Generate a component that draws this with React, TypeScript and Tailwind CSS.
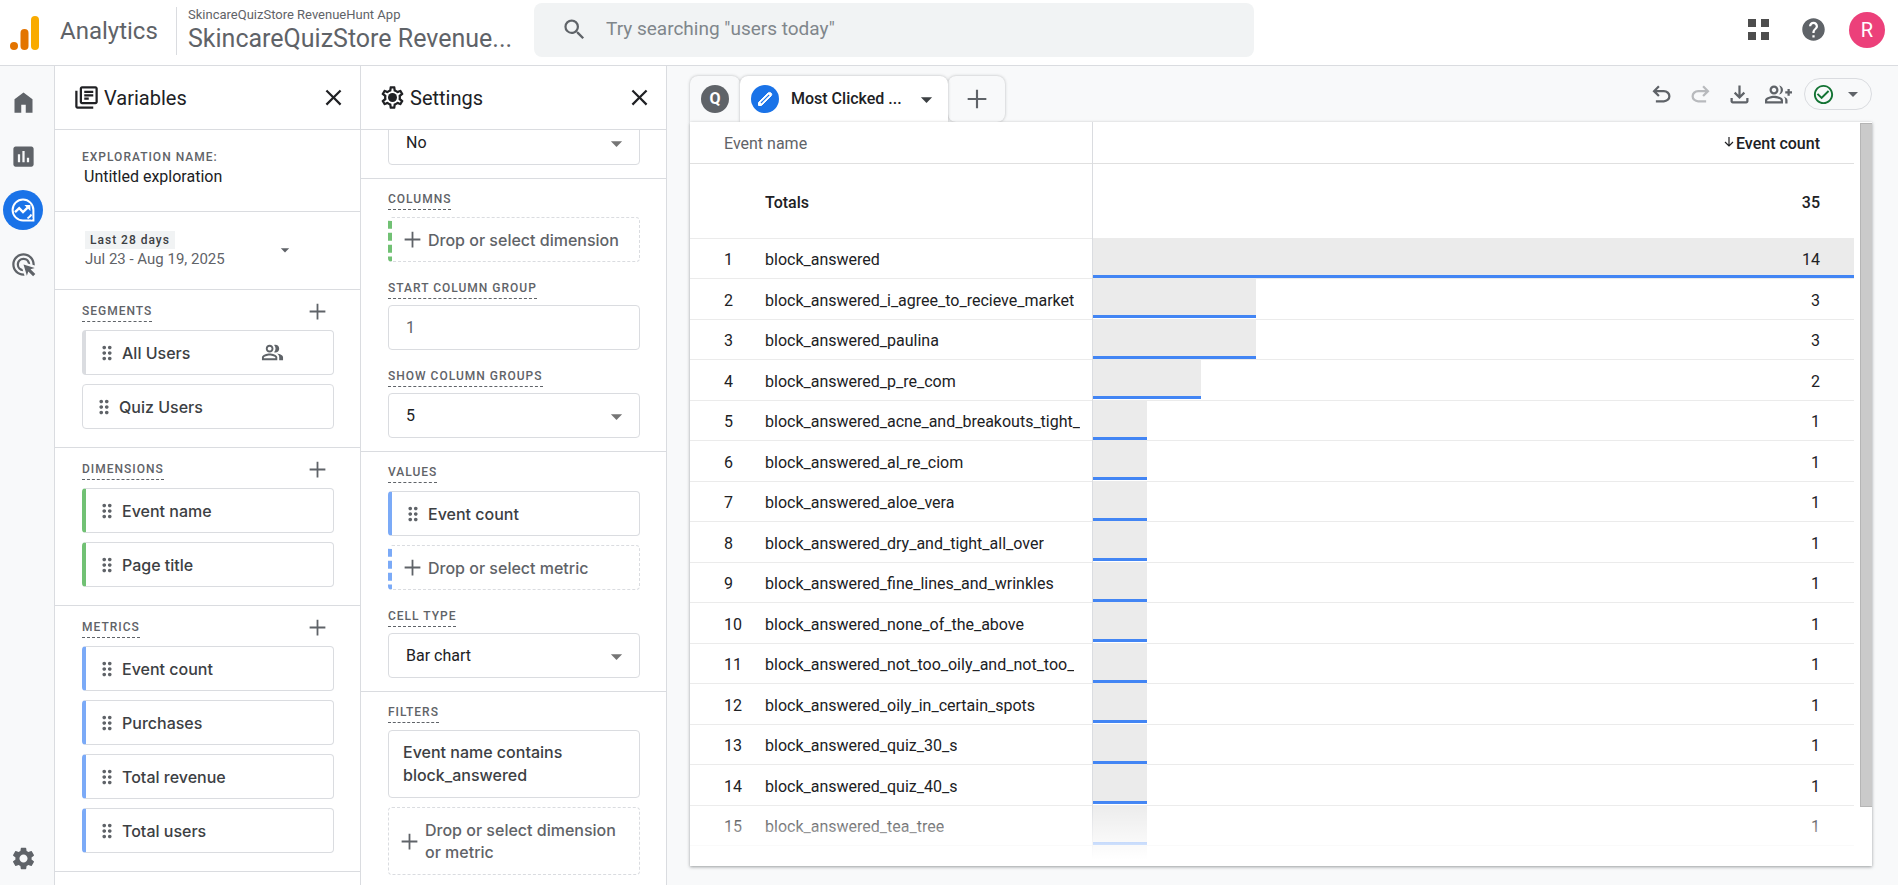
import { ReactNode, useState } from "react";
import {
  MdAdsClick,
  MdArrowDropDown,
  MdCheckCircleOutline,
  MdClose,
  MdDragIndicator,
  MdHelp,
  MdInsertChart,
  MdOutlineGroupAdd,
  MdOutlineLibraryBooks,
  MdOutlinePeopleAlt,
  MdSearch,
  MdSettings,
} from "react-icons/md";

type Accent = "none" | "gray" | "green" | "blue";

interface EventRow {
  name: string;
  count: number;
}

const rows: EventRow[] = [
  { name: "block_answered", count: 14 },
  { name: "block_answered_i_agree_to_recieve_market", count: 3 },
  { name: "block_answered_paulina", count: 3 },
  { name: "block_answered_p_re_com", count: 2 },
  { name: "block_answered_acne_and_breakouts_tight_", count: 1 },
  { name: "block_answered_al_re_ciom", count: 1 },
  { name: "block_answered_aloe_vera", count: 1 },
  { name: "block_answered_dry_and_tight_all_over", count: 1 },
  { name: "block_answered_fine_lines_and_wrinkles", count: 1 },
  { name: "block_answered_none_of_the_above", count: 1 },
  { name: "block_answered_not_too_oily_and_not_too_", count: 1 },
  { name: "block_answered_oily_in_certain_spots", count: 1 },
  { name: "block_answered_quiz_30_s", count: 1 },
  { name: "block_answered_quiz_40_s", count: 1 },
  { name: "block_answered_tea_tree", count: 1 },
  { name: "block_answered_teenaged_30_s", count: 1 },
];

const maxCount = 14;

const accentClass: Record<Accent, string> = {
  none: "",
  gray: "border-l-4 border-l-[#dadce0]",
  green: "border-l-4 border-l-[#71c174]",
  blue: "border-l-4 border-l-[#7baaf7]",
};

/* icons */

const Plus = ({ className = "size-[27px]" }: { className?: string }) => (
  <svg viewBox="0 0 24 24" className={`${className} shrink-0`} fill="none" stroke="currentColor" strokeWidth="1.6">
    <path d="M12 5v14M5 12h14" />
  </svg>
);

const Symbol = ({ d, className = "" }: { d: string; className?: string }) => (
  <svg viewBox="0 -960 960 960" className={`size-[27px] ${className}`} fill="currentColor">
    <path d={d} />
  </svg>
);

const undoPath =
  "M280-200v-80h284q63 0 109.5-40T720-420q0-60-46.5-100T564-560H312l104 104-56 56-200-200 200-200 56 56-104 104h252q97 0 167 63.5T800-420q0 93-69 156.5T564-200H280Z";
const downloadPath =
  "M480-320 280-520l56-58 104 104v-326h80v326l104-104 56 58-200 200ZM240-160q-33 0-56.5-23.5T160-240v-120h80v120h480v-120h80v120q0 33-23.5 56.5T720-160H240Z";
const homePath = "M160-120v-480l320-240 320 240v480H560v-280H400v280H160Z";

const GearOutline = () => (
  <svg viewBox="0 0 24 24" className="size-[27px]" fill="currentColor">
    <path d="M19.43 12.98c.04-.32.07-.64.07-.98 0-.34-.03-.66-.07-.98l2.11-1.65c.19-.15.24-.42.12-.64l-2-3.46a.5.5 0 0 0-.61-.22l-2.49 1c-.52-.4-1.08-.73-1.69-.98l-.38-2.65A.488.488 0 0 0 14 2h-4c-.25 0-.46.18-.49.42l-.38 2.65c-.61.25-1.17.59-1.69.98l-2.49-1a.566.566 0 0 0-.18-.03c-.17 0-.34.09-.43.25l-2 3.46c-.13.22-.07.49.12.64l2.11 1.65c-.04.32-.07.65-.07.98 0 .33.03.66.07.98l-2.11 1.65c-.19.15-.24.42-.12.64l2 3.46a.5.5 0 0 0 .61.22l2.49-1c.52.4 1.08.73 1.69.98l.38 2.65c.03.24.24.42.49.42h4c.25 0 .46-.18.49-.42l.38-2.65c.61-.25 1.17-.59 1.69-.98l2.49 1c.06.02.12.03.18.03.17 0 .34-.09.43-.25l2-3.46c.12-.22.07-.49-.12-.64l-2.11-1.65zm-1.98-1.71c.04.31.05.52.05.73 0 .21-.02.43-.05.73l-.14 1.13.89.7 1.08.84-.7 1.21-1.27-.51-1.04-.42-.9.68c-.43.32-.84.56-1.25.73l-1.06.43-.16 1.13-.2 1.35h-1.4l-.19-1.35-.16-1.13-1.06-.43c-.43-.18-.83-.41-1.23-.71l-.91-.7-1.06.43-1.27.51-.7-1.21 1.08-.84.89-.7-.14-1.13c-.03-.31-.05-.54-.05-.74s.02-.43.05-.73l.14-1.13-.89-.7-1.08-.84.7-1.21 1.27.51 1.04.42.9-.68c.43-.32.84-.56 1.25-.73l1.06-.43.16-1.13.2-1.35h1.39l.19 1.35.16 1.13 1.06.43c.43.18.83.41 1.23.71l.91.7 1.06-.43 1.27-.51.7 1.21-1.07.85-.89.7.14 1.13z" />
    <circle cx="12" cy="12" r="4" />
  </svg>
);

const ExploreIcon = () => (
  <svg viewBox="0 0 24 24" className="size-6" fill="none" stroke="currentColor">
    <path d="M12 1.6A10.4 10.4 0 1 0 12 22.4H22.4V12A10.4 10.4 0 0 0 12 1.6Z" strokeWidth="2" />
    <path d="M20.4 16.5A9.5 9.5 0 0 1 16.5 20.4" strokeWidth="2" />
    <path d="M4 14.2 8.2 10.2 12 14 17.4 8.8" strokeWidth="2.4" />
    <path d="M13.4 7h6v6Z" fill="currentColor" stroke="none" />
    <circle cx="20.6" cy="20.6" r="1" fill="#1a73e8" stroke="none" />
  </svg>
);

const PencilIcon = () => (
  <svg viewBox="0 0 16 16" className="size-4" fill="none" stroke="currentColor" strokeLinejoin="round">
    <path d="M1.5 14.5V11.5L11 2Q12.5.8 14 2T14 5L4.5 14.5Z" fill="currentColor" />
    <path d="M4 12 12.2 3.8" stroke="#1a73e8" strokeWidth="1.2" />
  </svg>
);

const AnalyticsLogo = () => (
  <svg viewBox="0 0 29 34" className="h-[34px] w-[29px] shrink-0">
    <rect x="21" y="0" width="8" height="34" rx="4" fill="#f9ab00" />
    <rect x="10.5" y="13" width="8" height="21" rx="4" fill="#e37400" />
    <circle cx="4" cy="30" r="4" fill="#e37400" />
  </svg>
);

/* panels */

const SectionLabel = ({ children, htmlFor }: { children: ReactNode; htmlFor?: string }) => {
  const className =
    "block w-fit border-b border-dashed border-[#5f6368] text-xs leading-5 font-medium tracking-[1px] text-[#5f6368] uppercase";

  return htmlFor ? (
    <label htmlFor={htmlFor} className={className}>
      {children}
    </label>
  ) : (
    <h3 className={className}>{children}</h3>
  );
};

const Chip = ({ label, accent, people }: { label: string; accent: Accent; people?: boolean }) => (
  <button
    className={`flex h-[45px] w-full items-center rounded border border-[#dadce0] pr-[49px] pl-2.5 text-left font-[Inter,sans-serif] text-base font-medium text-[#3c4043] ${accentClass[accent]}`}
  >
    <MdDragIndicator className="mr-1 size-[22px] text-[#5f6368]" />
    <span className="grow">{label}</span>
    {people && <MdOutlinePeopleAlt className="size-[23px] text-[#5f6368]" />}
  </button>
);

const DropZone = ({ label, accent }: { label: string; accent: Accent }) => (
  <button
    className={`flex min-h-[45px] w-full items-center rounded border border-dashed border-[#dadce0] pr-2 pl-[7px] text-left font-[Inter,sans-serif] text-base leading-[22px] font-medium text-[#5f6368] ${accentClass[accent]}`}
  >
    <Plus />
    <span className="ml-0.5">{label}</span>
  </button>
);

const SelectField = ({ id, value, label }: { id: string; value: string; label?: string }) => (
  <div className="relative">
    <select
      id={id}
      aria-label={label}
      className="h-[45px] w-full appearance-none rounded border border-[#dadce0] bg-white px-[17px] text-base text-[#202124]"
    >
      <option>{value}</option>
    </select>
    <MdArrowDropDown className="pointer-events-none absolute top-2.5 right-2.5 size-[27px] text-[#757575]" />
  </div>
);

const PanelHeader = ({ icon, title }: { icon: ReactNode; title: string }) => (
  <header className="flex h-16 shrink-0 items-center border-b border-[#dadce0] pr-[13px] pl-[18px] text-[#202124]">
    {icon}
    <h2 className="ml-1 grow text-xl">{title}</h2>
    <button aria-label={`Close ${title}`}>
      <MdClose className="size-[27px]" />
    </button>
  </header>
);

const VariableSection = ({ title, children }: { title: string; children: ReactNode }) => (
  <section className="border-b border-[#dadce0] pt-[11px] pr-[26px] pb-[18px] pl-[27px]">
    <div className="flex items-center justify-between pr-[3px] pb-2">
      <SectionLabel>{title}</SectionLabel>
      <button aria-label={`Add ${title.toLowerCase()}`} className="-my-1 text-[#5f6368]">
        <Plus />
      </button>
    </div>
    <div className="flex flex-col gap-[9px]">{children}</div>
  </section>
);

const VariablesPanel = () => (
  <aside className="flex w-[306px] shrink-0 flex-col overflow-hidden border-r border-[#dadce0] bg-white">
    <PanelHeader icon={<MdOutlineLibraryBooks className="size-[27px]" />} title="Variables" />
    <section className="h-[82px] shrink-0 border-b border-[#dadce0] px-[27px] pt-[17px]">
      <label
        htmlFor="exploration-name"
        className="block text-xs leading-5 font-medium tracking-[1px] text-[#5f6368] uppercase"
      >
        Exploration name:
      </label>
      <input
        id="exploration-name"
        defaultValue="Untitled exploration"
        className="block w-full px-0.5 text-base leading-5 text-[#202124]"
      />
    </section>
    <button className="flex h-[78px] shrink-0 items-center border-b border-[#dadce0] pr-[65px] pb-0.5 pl-[30px] text-left">
      <span className="grow">
        <span className="block w-fit bg-[#f1f3f4] px-[5px] text-xs leading-[18px] font-medium tracking-[1px] text-[#3c4043]">
          Last 28 days
        </span>
        <span className="block text-[15px] leading-5 text-[#5f6368]">Jul 23 - Aug 19, 2025</span>
      </span>
      <MdArrowDropDown className="size-5 text-[#5f6368]" />
    </button>
    <VariableSection title="Segments">
      <Chip label="All Users" accent="gray" people />
      <Chip label="Quiz Users" accent="none" />
    </VariableSection>
    <VariableSection title="Dimensions">
      <Chip label="Event name" accent="green" />
      <Chip label="Page title" accent="green" />
    </VariableSection>
    <VariableSection title="Metrics">
      <Chip label="Event count" accent="blue" />
      <Chip label="Purchases" accent="blue" />
      <Chip label="Total revenue" accent="blue" />
      <Chip label="Total users" accent="blue" />
    </VariableSection>
  </aside>
);

const SettingsPanel = () => (
  <aside className="flex w-[306px] shrink-0 flex-col overflow-hidden border-r border-[#dadce0] bg-white">
    <PanelHeader icon={<GearOutline />} title="Settings" />
    <div className="min-h-0 grow overflow-hidden">
      <section className="-mt-2.5 border-b border-[#dadce0] pr-[26px] pb-[13px] pl-[27px]">
        <SelectField id="nested-rows" value="No" label="Nested rows" />
      </section>
      <section className="border-b border-[#dadce0] pt-2.5 pr-[26px] pb-[13px] pl-[27px]">
        <SectionLabel>Columns</SectionLabel>
        <div className="pt-[7px] pb-4">
          <DropZone label="Drop or select dimension" accent="green" />
        </div>
        <SectionLabel htmlFor="start-column">Start column group</SectionLabel>
        <div className="pt-1.5 pb-4">
          <input
            id="start-column"
            defaultValue="1"
            className="block h-[45px] w-full rounded border border-[#dadce0] px-[17px] text-base text-[#5f6368]"
          />
        </div>
        <SectionLabel htmlFor="column-groups">Show column groups</SectionLabel>
        <div className="pt-1.5">
          <SelectField id="column-groups" value="5" />
        </div>
      </section>
      <section className="border-b border-[#dadce0] pt-2.5 pr-[26px] pb-[13px] pl-[27px]">
        <SectionLabel>Values</SectionLabel>
        <div className="flex flex-col gap-[9px] pt-2 pb-4">
          <Chip label="Event count" accent="blue" />
          <DropZone label="Drop or select metric" accent="blue" />
        </div>
        <SectionLabel htmlFor="cell-type">Cell type</SectionLabel>
        <div className="pt-1.5">
          <SelectField id="cell-type" value="Bar chart" />
        </div>
      </section>
      <section className="pt-2.5 pr-[26px] pl-[27px]">
        <SectionLabel>Filters</SectionLabel>
        <div className="flex flex-col gap-[9px] pt-[7px]">
          <button className="rounded border border-[#dadce0] px-3.5 py-2.5 text-left font-[Inter,sans-serif] text-base leading-[23px] font-medium text-[#3c4043]">
            Event name contains block_answered
          </button>
          <div className="flex min-h-[68px]">
            <DropZone label="Drop or select dimension or metric" accent="none" />
          </div>
        </div>
      </section>
    </div>
  </aside>
);

/* report */

const ReportTable = () => (
  <table className="w-full table-fixed border-collapse text-base text-[#202124]">
    <colgroup>
      <col className="w-[402px]" />
      <col />
    </colgroup>
    <thead>
      <tr className="h-[41px] border-b border-[#e0e0e0]">
        <th className="border-r border-[#dadce0] pt-1 pl-[34px] text-left font-normal text-[#5f6368]">Event name</th>
        <th className="pt-1 pr-[34px] font-medium">
          <span className="flex items-center justify-end gap-0.5">
            <svg viewBox="0 0 10 12" className="mb-1 h-3 w-2.5" fill="none" stroke="currentColor" strokeWidth="1.2">
              <path d="M5 1v9M1 6l4 4 4-4" />
            </svg>
            Event count
          </span>
        </th>
      </tr>
    </thead>
    <tbody>
      <tr className="h-[75px] border-b border-[#ebebeb]">
        <td className="border-r border-[#dadce0] pt-1 pl-[75px] font-medium">Totals</td>
        <td className="pt-1 pr-[34px] text-right font-medium">35</td>
      </tr>
      {rows.map((row, index) => (
        <tr key={row.name} className="h-[41px] border-b border-[#ebebeb] even:h-10">
          <td className="border-r border-[#dadce0] p-0">
            <div className="flex pt-1 pl-[34px]">
              <span className="w-[41px]">{index + 1}</span>
              <span className="truncate">{row.name}</span>
            </div>
          </td>
          <td className="p-0">
            <div className="grid h-[39px] items-center">
              <div
                className="col-start-1 row-start-1 h-full border-b-[3px] border-[#4285f4] bg-[#ebebeb]"
                style={{ width: `${(row.count / maxCount) * 100}%` }}
              />
              <span className="col-start-1 row-start-1 pt-1 pr-[34px] text-right">{row.count}</span>
            </div>
          </td>
        </tr>
      ))}
    </tbody>
  </table>
);

const Toolbar = () => (
  <div className="flex h-14 shrink-0 items-center text-[#5f6368]">
    <div className="flex self-end">
      <button
        aria-label="Tab Q"
        className="flex h-[46px] w-[50px] items-center justify-center rounded-t-lg bg-[#f8f9fa] shadow-[0_0_3px_rgba(60,64,67,0.35)]"
      >
        <span className="flex size-7 items-center justify-center rounded-full bg-[#5f6368] text-base font-bold text-white">
          Q
        </span>
      </button>
      <button className="z-10 flex h-[46px] w-[208px] items-center rounded-t-lg bg-white pr-2 pl-[11px] text-[#202124] shadow-[0_0_3px_rgba(60,64,67,0.35)]">
        <span className="flex size-7 items-center justify-center rounded-full bg-[#1a73e8] text-white">
          <PencilIcon />
        </span>
        <span className="ml-3 grow text-left text-base font-medium">Most Clicked ...</span>
        <MdArrowDropDown className="size-[27px] text-[#3c4043]" />
      </button>
      <button
        aria-label="Add tab"
        className="flex h-[46px] w-[57px] items-center justify-center rounded-lg bg-[#f8f9fa] shadow-[0_0_3px_rgba(60,64,67,0.35)]"
      >
        <Plus className="size-8" />
      </button>
    </div>
    <div className="ml-auto flex items-center gap-3">
      <button aria-label="Undo">
        <Symbol d={undoPath} />
      </button>
      <button aria-label="Redo" className="text-[#b8babd]">
        <Symbol d={undoPath} className="-scale-x-100" />
      </button>
      <button aria-label="Download">
        <Symbol d={downloadPath} />
      </button>
      <button aria-label="Share">
        <MdOutlineGroupAdd className="size-[27px]" />
      </button>
      <button
        aria-label="Data quality"
        className="flex h-8 w-[68px] items-center justify-between rounded-full border border-[#dadce0] pr-1.5 pl-[7px]"
      >
        <MdCheckCircleOutline className="size-[23px] text-[#137333]" />
        <MdArrowDropDown className="size-6" />
      </button>
    </div>
  </div>
);

const Report = () => (
  <main className="flex min-w-0 grow flex-col bg-[#f8f9fa] pr-[26px] pb-[19px] pl-[23px]">
    <Toolbar />
    <div className="relative z-20 flex min-h-0 grow overflow-hidden bg-white shadow-[0_1px_3px_rgba(60,64,67,0.5)]">
      <div className="min-w-0 grow">
        <ReportTable />
      </div>
      <div className="w-[18px] shrink-0 pt-px pl-1.5">
        <div className="h-[92%] border border-r-0 border-[#b5b5b5] bg-[#cacaca]" />
      </div>
      <div className="pointer-events-none absolute right-[18px] bottom-0 left-0 h-16 bg-linear-to-t from-white from-10% to-transparent" />
    </div>
  </main>
);

/* frame */

const Header = () => (
  <header className="flex h-[66px] shrink-0 items-center border-b border-[#dadce0] bg-white pr-[13px] pl-2.5 text-[#5f6368]">
    <AnalyticsLogo />
    <span className="mb-1 ml-[21px] w-[116px] text-2xl">Analytics</span>
    <div className="mb-1 w-[358px] border-l border-[#dadce0] pl-[11px]">
      <p className="text-[13px] leading-4">SkincareQuizStore RevenueHunt App</p>
      <p className="text-[25px] leading-8 whitespace-nowrap">SkincareQuizStore Revenue...</p>
    </div>
    <label className="mb-1.5 flex h-[54px] w-[720px] items-center rounded-lg bg-[#f1f3f4] pl-[27px]">
      <MdSearch className="size-[27px]" />
      <input
        aria-label="Search"
        placeholder={'Try searching "users today"'}
        className="ml-[18px] grow text-[19px] outline-none placeholder:text-[#80868b]"
      />
    </label>
    <div className="mb-1.5 ml-auto flex items-center">
      <button aria-label="Apps" className="grid grid-cols-2 gap-[5px] *:size-2 *:bg-[#4d4d4d]">
        <span />
        <span />
        <span />
        <span />
      </button>
      <button aria-label="Help" className="ml-[31px]">
        <MdHelp className="size-[27px]" />
      </button>
      <button className="ml-[22px] size-9 rounded-full bg-[#ec407a] text-xl text-white">R</button>
    </div>
  </header>
);

const Rail = () => {
  const [active] = useState("explore");

  const items = [
    { id: "home", icon: <Symbol d={homePath} /> },
    { id: "reports", icon: <MdInsertChart className="size-[27px]" /> },
    { id: "explore", icon: <ExploreIcon /> },
    { id: "advertising", icon: <MdAdsClick className="size-[27px]" /> },
  ];

  return (
    <nav className="flex w-[55px] shrink-0 flex-col items-start gap-3.5 border-r border-[#dadce0] bg-[#f8f9fa] pt-4 pb-[7px] pl-[3px] text-[#5f6368]">
      {items.map((item) => (
        <button
          key={item.id}
          aria-label={item.id}
          className={`flex size-10 items-center justify-center rounded-full ${
            item.id === active ? "bg-[#1a73e8] text-white" : ""
          }`}
        >
          {item.icon}
        </button>
      ))}
      <button aria-label="Admin" className="mt-auto flex size-10 items-center justify-center">
        <MdSettings className="size-[27px]" />
      </button>
    </nav>
  );
};

const App = () => (
  <div className="flex h-screen flex-col overflow-hidden font-[Roboto,sans-serif]">
    <Header />
    <div className="flex min-h-0 grow">
      <Rail />
      <VariablesPanel />
      <SettingsPanel />
      <Report />
    </div>
  </div>
);

export default App;
